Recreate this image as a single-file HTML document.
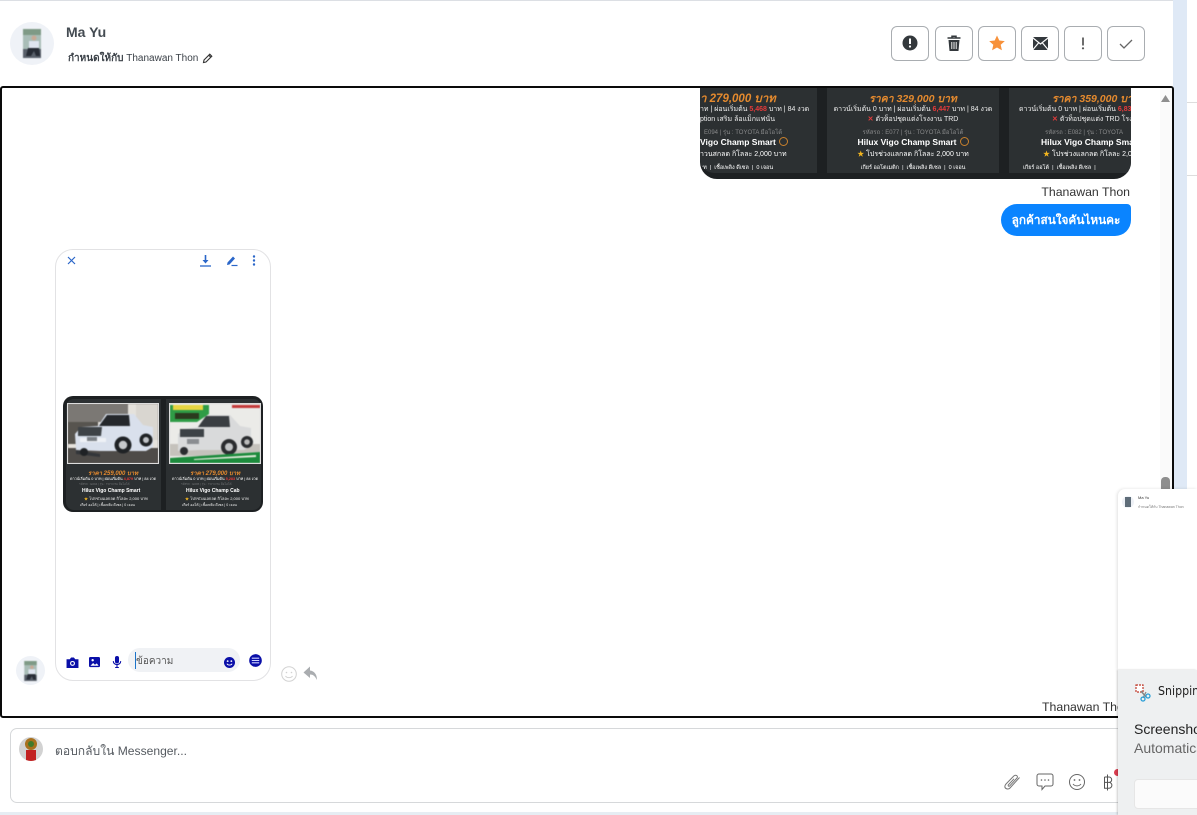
<!DOCTYPE html>
<html><head><meta charset="utf-8"><style>
html,body{margin:0;padding:0;background:#fff}
#r{position:relative;width:1197px;height:815px;overflow:hidden;background:#fff;font-family:"Liberation Sans","Noto Sans CJK SC",sans-serif;color:#333}
#r div,#r svg,#r span{position:absolute;box-sizing:border-box}
.btn{top:26px;width:38px;height:35px;border:1px solid #a9adb1;border-radius:6px;background:#fff}
.t{white-space:nowrap}
.card{background:#2c3032;top:0;height:100%;overflow:hidden;color:#fff;text-align:center}
.card span{left:0;right:0;white-space:nowrap;text-align:center}
.photo{border:1px solid #ddd;overflow:hidden}
i.c{display:inline-block;width:7px;height:7px;border:1px solid #c9812d;border-radius:50%;margin-left:3px;vertical-align:-1px}
.p{font:italic bold 10.500px "Liberation Sans","Noto Sans CJK SC",sans-serif;color:#e58a2e}
</style></head><body><div id="r">
<div style="left:0;top:0;width:1173px;height:1px;background:#dcdfe4"></div>
<div style="left:1173px;top:0;width:14px;height:815px;background:#dfe9f6"></div>
<div style="left:1187px;top:102px;width:10px;height:1px;background:#ddd"></div>
<div style="left:1187px;top:175px;width:10px;height:1px;background:#ddd"></div>

<div style="left:10px;top:22px;width:44px;height:43px;border-radius:50%;background:#eff2f7"></div>
<svg style="left:23px;top:29px;filter:blur(.5px)" width="18" height="29" viewBox="0 0 18 29"><rect width="18" height="29" fill="#a9bdb7"/><rect y="0" width="18" height="6" fill="#7f9a86"/><rect y="20" width="18" height="9" fill="#59606a"/><circle cx="11" cy="9" r="2.500" fill="#c9a995"/><path d="M6 12h10v7H6z" fill="#dfe5f0"/><path d="M5 19h11l1 8h-4l-2-5-3 5H3z" fill="#272c35"/></svg>
<div class="t" style="left:66px;top:24px;font-size:14px;font-weight:bold;color:#444b52">Ma Yu</div>
<div class="t" style="left:68px;top:51px;font-size:10px;color:#3c4249"><b>กำหนดให้กับ</b> Thanawan Thon</div>
<svg style="left:202px;top:53px" width="11" height="11" viewBox="0 0 11 11"><path d="M1.500 9.500 L2 7 L7.800 1.200 L9.800 3.200 L4 9 Z M6.800 2.200 L8.800 4.200" fill="none" stroke="#333" stroke-width="1.100"/></svg>

<div class="btn" style="left:891px"><svg style="left:10px;top:8px" width="16" height="16" viewBox="0 0 16 16"><circle cx="8" cy="8" r="7.500" fill="#33383c"/><path d="M8 3.500V9" stroke="#fff" stroke-width="2"/><circle cx="8" cy="11.500" r="1.100" fill="#fff"/></svg></div>
<div class="btn" style="left:935px"><svg style="left:10px;top:8px" width="16" height="17" viewBox="0 0 16 17"><path d="M1.500 3h13M6 3V1.200h4V3" fill="none" stroke="#33383c" stroke-width="1.500"/><path d="M2.500 5h11l-1 11h-9z" fill="#33383c"/><path d="M5.800 7v7M8 7v7M10.200 7v7" stroke="#fff" stroke-width=".9"/></svg></div>
<div class="btn" style="left:978px"><svg style="left:10px;top:8px" width="16" height="16" viewBox="0 0 16 16"><path d="M8 .5l2.300 5 5.500.6-4.100 3.700 1.200 5.500L8 12.500l-4.900 2.800 1.200-5.500L.2 6.100l5.500-.6z" fill="#f7913a"/></svg></div>
<div class="btn" style="left:1021px"><svg style="left:11px;top:10px" width="15" height="13" viewBox="0 0 15 13"><rect width="15" height="13" rx="1.500" fill="#33383c"/><path d="M0 1l7.500 6L15 1M0 12.500l5.500-6.500M15 12.500L9.500 6" fill="none" stroke="#fff" stroke-width="1.200"/></svg></div>
<div class="btn" style="left:1064px"><svg style="left:15px;top:10px" width="6" height="13" viewBox="0 0 6 13"><path d="M3 .5V8.500" stroke="#555" stroke-width="1.700"/><circle cx="3" cy="11.300" r="1.100" fill="#555"/></svg></div>
<div class="btn" style="left:1107px"><svg style="left:11px;top:12px" width="14" height="10" viewBox="0 0 14 10"><path d="M1 5l4 4L13 1" fill="none" stroke="#666" stroke-width="1.300"/></svg></div>

<!-- chat frame -->
<div style="left:0;top:86px;width:1174px;height:632px;border:2px solid #0a0a0a;border-radius:3px;overflow:hidden;background:#fff">
 <div style="left:698px;top:-2px;width:431px;height:93px;background:#1d2022;border-radius:0 0 17px 17px;overflow:hidden">
  <div class="card" style="left:0;width:117px;height:87px;top:0;border-radius:0 0 0 14px">
   <span class="t p" style="top:4px;text-align:left;left:0;right:auto;font-size:11.500px">า 279,000 บาท</span>
   <span style="top:18px;left:0;right:auto;font-size:7px;color:#eee">าท | ผ่อนเริ่มต้น <b style="color:#e53b3b">5,468</b> บาท | 84 งวด</span>
   <span style="top:28px;left:0;right:auto;font-size:7px;color:#eee">ption เสริม ล้อแม็กแฟนั่น</span>
   <span style="top:41px;left:4px;right:auto;font-size:6px;color:#88898a">E094 | รุ่น : TOYOTA มือโอโต้</span>
   <span style="top:51px;left:0;right:auto;font-size:8.500px;font-weight:bold">Vigo Champ Smart<i class="c"></i></span>
   <span style="top:63px;left:0;right:auto;font-size:7px">าวนสกลด กิโลละ 2,000 บาท</span>
   <span style="top:78px;left:0;right:auto;font-size:5.500px">าท &nbsp;|&nbsp; เชื้อเพลิง ดีเซล &nbsp;|&nbsp; 0 เจอน</span>
  </div>
  <div class="card" style="left:127px;width:172px;height:87px">
   <span class="p" style="top:4px">ราคา 329,000 บาท</span>
   <span style="top:18px;font-size:7px;color:#eee">ดาวน์เริ่มต้น 0 บาท | ผ่อนเริ่มต้น <b style="color:#e53b3b">6,447</b> บาท | 84 งวด</span>
   <span style="top:28px;font-size:7px;color:#eee"><b style="color:#e53b3b">✕</b> ตัวท็อปชุดแต่งโรงงาน TRD</span>
   <span style="top:41px;font-size:6px;color:#88898a">รหัสรถ : E077 | รุ่น : TOYOTA มือโอโต้</span>
   <span style="top:51px;font-size:8.500px;font-weight:bold">Hilux Vigo Champ Smart<i class="c"></i></span>
   <span style="top:63px;font-size:7px"><b style="color:#f3b51f">★</b> โปรช่วงแลกลด กิโลละ 2,000 บาท</span>
   <span style="top:78px;font-size:5.500px">เกียร์ ออโตเมติก &nbsp;|&nbsp; เชื้อเพลิง ดีเซล &nbsp;|&nbsp; 0 เจอน</span>
  </div>
  <div class="card" style="left:309px;width:122px;height:87px">
   <span class="p" style="top:4px;left:43px;right:auto">ราคา 359,000 บาท</span>
   <span style="top:18px;left:10px;right:auto;font-size:7px;color:#eee">ดาวน์เริ่มต้น 0 บาท | ผ่อนเริ่มต้น <b style="color:#e53b3b">6,833</b></span>
   <span style="top:28px;left:43px;right:auto;font-size:7px;color:#eee"><b style="color:#e53b3b">✕</b> ตัวท็อปชุดแต่ง TRD โรงงาน</span>
   <span style="top:41px;left:36px;right:auto;font-size:6px;color:#88898a">รหัสรถ : E082 | รุ่น : TOYOTA</span>
   <span style="top:51px;left:32px;right:auto;font-size:8.500px;font-weight:bold">Hilux Vigo Champ Smart</span>
   <span style="top:63px;left:34px;right:auto;font-size:7px"><b style="color:#f3b51f">★</b> โปรช่วงแลกลด กิโลละ 2,000 บาท</span>
   <span style="top:78px;left:14px;right:auto;font-size:5.500px">เกียร์ ออโต้ &nbsp;|&nbsp; เชื้อเพลิง ดีเซล &nbsp;|</span>
  </div>
 </div>
 <div class="t" style="right:42px;top:97px;font-size:12.300px;color:#333">Thanawan Thon</div>
 <div class="t" style="left:999px;top:116px;width:130px;height:32px;background:#0a84ff;border-radius:16px 4px 16px 16px;color:#fff;font-size:11.800px;font-weight:bold;line-height:32px;text-align:center">ลูกค้าสนใจคันไหนคะ</div>

 <!-- phone -->
 <div style="left:53px;top:161px;width:216px;height:432px;border:1px solid #e2e2e4;border-radius:18px;background:#fff"></div>
 <svg style="left:65px;top:168px" width="9" height="9" viewBox="0 0 9 9"><path d="M1 1l7 7M8 1L1 8" stroke="#2a66c9" stroke-width="1.200"/></svg>
 <svg style="left:197px;top:166px" width="13" height="13" viewBox="0 0 13 13"><path d="M6.500 1v6" stroke="#2a66c9" stroke-width="1.600"/><path d="M3.500 6h6l-3 3.500z" fill="#2a66c9"/><path d="M1 12h11" stroke="#2a66c9" stroke-width="1.300"/></svg>
 <svg style="left:224px;top:167px" width="12" height="12" viewBox="0 0 12 12"><path d="M1 10l.5-2.500L7 1.500l2 2-5.500 6z" fill="#2a66c9"/><path d="M5.500 10.500h6" stroke="#2a66c9" stroke-width="1.200"/></svg>
 <svg style="left:250px;top:166px" width="4" height="13" viewBox="0 0 4 13"><circle cx="2" cy="2.500" r="1.200" fill="#2a66c9"/><circle cx="2" cy="6.500" r="1.200" fill="#2a66c9"/><circle cx="2" cy="10.500" r="1.200" fill="#2a66c9"/></svg>

 <div style="left:61px;top:308px;width:200px;height:116px;background:#1d2022;border-radius:10px;overflow:hidden">
  <div class="card" style="left:3px;width:95px;height:111px;top:3px;border-radius:8px 0 0 8px"></div>
  <div class="card" style="left:103px;width:95px;height:111px;top:3px;border-radius:0 8px 8px 0"></div>
  <div class="photo" style="left:4px;top:7px;width:92px;height:61px;background:#8d8a86">
   <svg style="left:0;top:0;filter:blur(.45px)" width="90" height="59" viewBox="0 0 90 59">
    <rect width="90" height="59" fill="#e5e2dc"/><rect width="60" height="18" fill="#7b7874"/><rect x="0" y="18" width="30" height="22" fill="#57544f"/><rect y="44" width="90" height="15" fill="#4e4b48"/><rect x="68" y="0" width="22" height="36" fill="#d9d6d0"/>
    <path d="M8 46l-1-16 6-7 17-1 8-12h28l9 11 10 2v20l-7 4H32z" fill="#d9e0ec"/>
    <path d="M31 22l8-11h22l1 11z" fill="#25282c"/>
    <path d="M10 23h24l-1 9H10z" fill="#3e4347"/><path d="M12 34h26v4H12z" fill="#eef1f6"/>
    <rect x="19" y="33" width="10" height="4" fill="#7b8086"/>
    <path d="M8 46l24 4v3l-24-3z" fill="#33363a"/>
    <circle cx="55" cy="41" r="8.500" fill="#1f2225"/><circle cx="55" cy="41" r="4.200" fill="#c6c9cc"/>
    <circle cx="78" cy="36" r="6.500" fill="#1f2225"/><circle cx="78" cy="36" r="3" fill="#bfc2c6"/>
    <circle cx="16" cy="48" r="4" fill="#1f2225"/>
   </svg>
  </div>
  <div class="photo" style="left:106px;top:7px;width:92px;height:61px;background:#ddd">
   <svg style="left:0;top:0;filter:blur(.45px)" width="90" height="59" viewBox="0 0 90 59">
    <rect width="90" height="59" fill="#ebebe8"/><rect y="40" width="90" height="12" fill="#c5c2bc"/>
    <path d="M8 47V30l6-5 14-2 8-12h24l10 11 11 2v18l-7 4H30z" fill="#d9dadb"/>
    <path d="M28 23l8-11h23l1 11z" fill="#3a3e42"/>
    <path d="M10 25h24v8H10z" fill="#3d4246"/><rect x="17" y="35" width="12" height="5" fill="#8a8d91"/>
    <circle cx="59" cy="43" r="8" fill="#2a2c2f"/><circle cx="59" cy="43" r="4" fill="#c2c4c6"/>
    <circle cx="77" cy="38" r="6" fill="#2a2c2f"/><circle cx="77" cy="38" r="2.800" fill="#bbb"/>
    <circle cx="14" cy="47" r="4" fill="#2a2c2f"/>
    <path d="M0 1h39v9l-12 8H0z" fill="#2f9c46"/><path d="M3 1h30v5H3z" fill="#e8d541"/><path d="M5 9h24v6H5z" fill="#2b3a1e"/><rect x="62" y="1" width="28" height="3" fill="#c43a3a"/>
    <path d="M0 54l90-6v11H0z" fill="#1c8b3c"/><path d="M24 55l62-4v2l-62 3z" fill="#e9eee0"/>
   </svg>
  </div>
  <span class="t" style="left:25px;top:72px;font:italic bold 6px 'Liberation Sans','Noto Sans CJK SC',sans-serif;color:#e58a2e">ราคา 259,000 บาท</span>
  <span class="t" style="left:127px;top:72px;font:italic bold 6px 'Liberation Sans','Noto Sans CJK SC',sans-serif;color:#e58a2e">ราคา 279,000 บาท</span>
  <span class="t" style="left:7px;top:80px;font-size:3.800px;color:#fff">ดาวน์เริ่มต้น 0 บาท | ผ่อนเริ่มต้น <b style="color:#e53b3b">4,879</b> บาท | 84 งวด</span>
  <span class="t" style="left:109px;top:80px;font-size:3.800px;color:#fff">ดาวน์เริ่มต้น 0 บาท | ผ่อนเริ่มต้น <b style="color:#e53b3b">5,283</b> บาท | 84 งวด</span>
  <span class="t" style="left:16px;top:86px;font-size:3px;color:#6f7173">รหัสรถ : E094 | รุ่น : TOYOTA มือโอโต้</span>
  <span class="t" style="left:118px;top:86px;font-size:3px;color:#6f7173">รหัสรถ : E095 | รุ่น : TOYOTA มือโอโต้</span>
  <span class="t" style="left:19px;top:92px;font-size:5px;font-weight:bold;color:#fff">Hilux Vigo Champ Smart</span>
  <span class="t" style="left:123px;top:92px;font-size:5px;font-weight:bold;color:#fff">Hilux Vigo Champ Cab</span>
  <span class="t" style="left:21px;top:99px;font-size:4px;color:#eee"><b style="color:#f3b51f">★</b> โปรช่วงแลกลด กิโลละ 2,000 บาท</span>
  <span class="t" style="left:122px;top:99px;font-size:4px;color:#eee"><b style="color:#f3b51f">★</b> โปรช่วงแลกลด กิโลละ 2,000 บาท</span>
  <span class="t" style="left:17px;top:106px;font-size:3.500px;color:#eee">เกียร์ ออโต้ | เชื้อเพลิง ดีเซล | 0 เจอน</span>
  <span class="t" style="left:119px;top:106px;font-size:3.500px;color:#eee">เกียร์ ออโต้ | เชื้อเพลิง ดีเซล | 0 เจอน</span>
 </div>

 <svg style="left:64px;top:569px" width="13" height="11" viewBox="0 0 13 12"><path d="M0 2.500h3.500L5 .5h3l1.500 2H13V12H0z" fill="#0a0fa8"/><circle cx="6.500" cy="7" r="2.700" fill="#fff"/><circle cx="6.500" cy="7" r="1.500" fill="#0a0fa8"/></svg>
 <svg style="left:87px;top:569px" width="11" height="11" viewBox="0 0 12 12"><rect width="12" height="11" rx="1.500" fill="#0a0fa8"/><path d="M1.500 9.500l3-3 2 2 2-1.500 2 2.500z" fill="#fff"/><circle cx="4" cy="3.500" r="1.300" fill="#fff"/></svg>
 <svg style="left:110px;top:568px" width="10" height="12" viewBox="0 0 10 13"><rect x="2.800" y="0" width="4.400" height="8" rx="2.200" fill="#0a0fa8"/><path d="M1 5.500c0 5 8 5 8 0M5 9.500V13M3 12.500h4" fill="none" stroke="#0a0fa8" stroke-width="1.200"/></svg>
 <div style="left:126px;top:560px;width:112px;height:24px;background:#f0f2f5;border-radius:12px"></div>
 <div style="left:133px;top:564px;width:1px;height:17px;background:#1a73c9"></div>
 <div class="t" style="left:134px;top:566px;font-size:10px;color:#555">ข้อความ</div>
 <svg style="left:222px;top:569px" width="11" height="11" viewBox="0 0 12 12"><circle cx="6" cy="6" r="6" fill="#0a0fa8"/><circle cx="4" cy="4.500" r="1" fill="#fff"/><circle cx="8" cy="4.500" r="1" fill="#fff"/><path d="M3.200 7.300c1 2 4.600 2 5.600 0" fill="none" stroke="#fff"/></svg>
 <svg style="left:247px;top:566px" width="13" height="13" viewBox="0 0 14 14"><circle cx="7" cy="7" r="6.800" fill="#0a0fa8"/><path d="M3 4.500h8M3 7h8M3 9.500h8" stroke="#cfd4ff" stroke-width="1.200"/></svg>

 <div style="left:14px;top:568px;width:29px;height:29px;border-radius:50%;background:#eff2f7"></div>
 <svg style="left:22px;top:573px;filter:blur(.5px)" width="13" height="20" viewBox="0 0 18 29"><rect width="18" height="29" fill="#a9bdb7"/><rect y="0" width="18" height="6" fill="#7f9a86"/><rect y="20" width="18" height="9" fill="#59606a"/><circle cx="11" cy="9" r="2.500" fill="#c9a995"/><path d="M6 12h10v7H6z" fill="#dfe5f0"/><path d="M5 19h11l1 8h-4l-2-5-3 5H3z" fill="#272c35"/></svg>
 <svg style="left:279px;top:578px" width="16" height="16" viewBox="0 0 16 16"><circle cx="8" cy="8" r="7.300" fill="none" stroke="#d2d2d2"/><circle cx="5.500" cy="6.500" r=".8" fill="#d2d2d2"/><circle cx="10.500" cy="6.500" r=".8" fill="#d2d2d2"/><path d="M4.500 10c1.500 2.200 5.500 2.200 7 0" fill="none" stroke="#d2d2d2"/></svg>
 <svg style="left:301px;top:578px" width="15" height="15" viewBox="0 0 15 15"><path d="M7 .5L.5 6.500 7 12V8.500c3 0 5 1.500 7 5.500 0-6-3-9-7-9.500z" fill="#aaadb0"/></svg>

 <div class="t" style="left:1040px;top:612px;font-size:12.300px;color:#333">Thanawan Thon</div>
 <div style="left:1158px;top:0;width:14px;height:630px;background:#fafafa"></div>
 <svg style="left:1159px;top:7px" width="9" height="7" viewBox="0 0 9 7"><path d="M4.500 0L9 7H0z" fill="#8e8e8e"/></svg>
 <div style="left:1159px;top:389px;width:9px;height:20px;background:#8e8e8e;border-radius:4px 4px 0 0"></div>
</div>

<!-- reply box -->
<div style="left:10px;top:728px;width:1130px;height:75px;border:1px solid #d6d8da;border-radius:7px;background:#fff"></div>
<div style="left:19px;top:737px;width:24px;height:24px;border-radius:50%;background:#d2d2d2;overflow:hidden">
 <div style="left:6px;top:1px;width:12px;height:12px;border-radius:50%;background:#a8711e"></div>
 <div style="left:9px;top:4px;width:6px;height:6px;border-radius:50%;background:#3f7a2c"></div>
 <div style="left:7px;top:13px;width:10px;height:11px;background:#c22121"></div>
</div>
<div class="t" style="left:55px;top:742px;font-size:12.100px;color:#555a60">ตอบกลับใน Messenger...</div>
<svg style="left:1003px;top:774px" width="18" height="17" viewBox="0 0 18 17"><path d="M16.500 3.500L7 14c-1.800 2-5.800.8-5-2.200.2-.7.500-1.200 1-1.800L10.800 2c1.800-1.700 4.700 0 3.200 2L6.800 11.800c-.9 1-2.200 0-1.400-1L11 4.800" fill="none" stroke="#777" stroke-width="1"/></svg>
<svg style="left:1036px;top:773px" width="18" height="18" viewBox="0 0 18 18"><path d="M3 1h12a2 2 0 012 2v8a2 2 0 01-2 2H9l-3 3.500V13H3a2 2 0 01-2-2V3a2 2 0 012-2z" fill="none" stroke="#666" stroke-width="1"/><circle cx="5.500" cy="7" r=".8" fill="#666"/><circle cx="9" cy="7" r=".8" fill="#666"/><circle cx="12.500" cy="7" r=".8" fill="#666"/></svg>
<svg style="left:1068px;top:773px" width="18" height="18" viewBox="0 0 18 18"><circle cx="9" cy="9" r="7.500" fill="none" stroke="#666"/><circle cx="6.500" cy="7" r=".9" fill="#666"/><circle cx="11.500" cy="7" r=".9" fill="#666"/><path d="M5 11c2 2.500 6 2.500 8 0" fill="none" stroke="#666"/></svg>
<svg style="left:1103px;top:774px" width="10" height="17" viewBox="0 0 10 17"><path d="M1.500 3h4.500a2.700 2.700 0 010 5.400H1.500M6 8.400a2.900 2.900 0 010 5.800H1.500V3M4.500 .5v16" fill="none" stroke="#555" stroke-width="1"/></svg>
<div style="left:1114px;top:769px;width:7px;height:7px;border-radius:50%;background:#dc3d50"></div>
<div style="left:0;top:812px;width:1173px;height:3px;background:#e6edf3"></div>

<!-- toast -->
<div style="left:1118px;top:489px;width:79px;height:181px;background:#fff;border-radius:7px 0 0 0;box-shadow:-1px 0 3px rgba(0,0,0,.12)"></div>
<div style="left:1122px;top:496px;width:12px;height:12px;border-radius:50%;background:#eef1f6"></div>
<div style="left:1125px;top:497px;width:6px;height:10px;background:#5e6c78"></div>
<div class="t" style="left:1138px;top:495px;font-size:4px;color:#333">Ma Yu</div>
<div class="t" style="left:1138px;top:504px;font-size:3.500px;color:#777">กำหนดให้กับ Thanawan Thon</div>
<div style="left:1118px;top:670px;width:79px;height:145px;background:#eef0f1;box-shadow:-1px 0 2px rgba(0,0,0,.2)"></div>
<svg style="left:1134px;top:684px" width="18" height="18" viewBox="0 0 18 18"><path d="M2 1h7v7H2z" fill="#fff" stroke="#c0392b" stroke-width="1.200" stroke-dasharray="2 1"/><path d="M7 7l5 6" stroke="#888" stroke-width="1.500"/><path d="M12 8l-3 6" stroke="#888" stroke-width="1.200"/><circle cx="9" cy="15" r="2" fill="none" stroke="#2b9fd8" stroke-width="1.300"/><circle cx="14" cy="12" r="2" fill="none" stroke="#2b9fd8" stroke-width="1.300"/></svg>
<div class="t" style="left:1158px;top:684px;font-size:12px;color:#222;font-family:'DejaVu Sans',sans-serif;transform-origin:0 0;transform:scaleX(.92)">Snipping Tool</div>
<div class="t" style="left:1134px;top:721px;font-size:14px;color:#222">Screenshot copied</div>
<div class="t" style="left:1134px;top:740px;font-size:14px;color:#666">Automatically saved</div>
<div style="left:1134px;top:779px;width:70px;height:30px;background:#fbfbfb;border:1px solid #e6e6e6;border-radius:4px"></div>
</div></body></html>
